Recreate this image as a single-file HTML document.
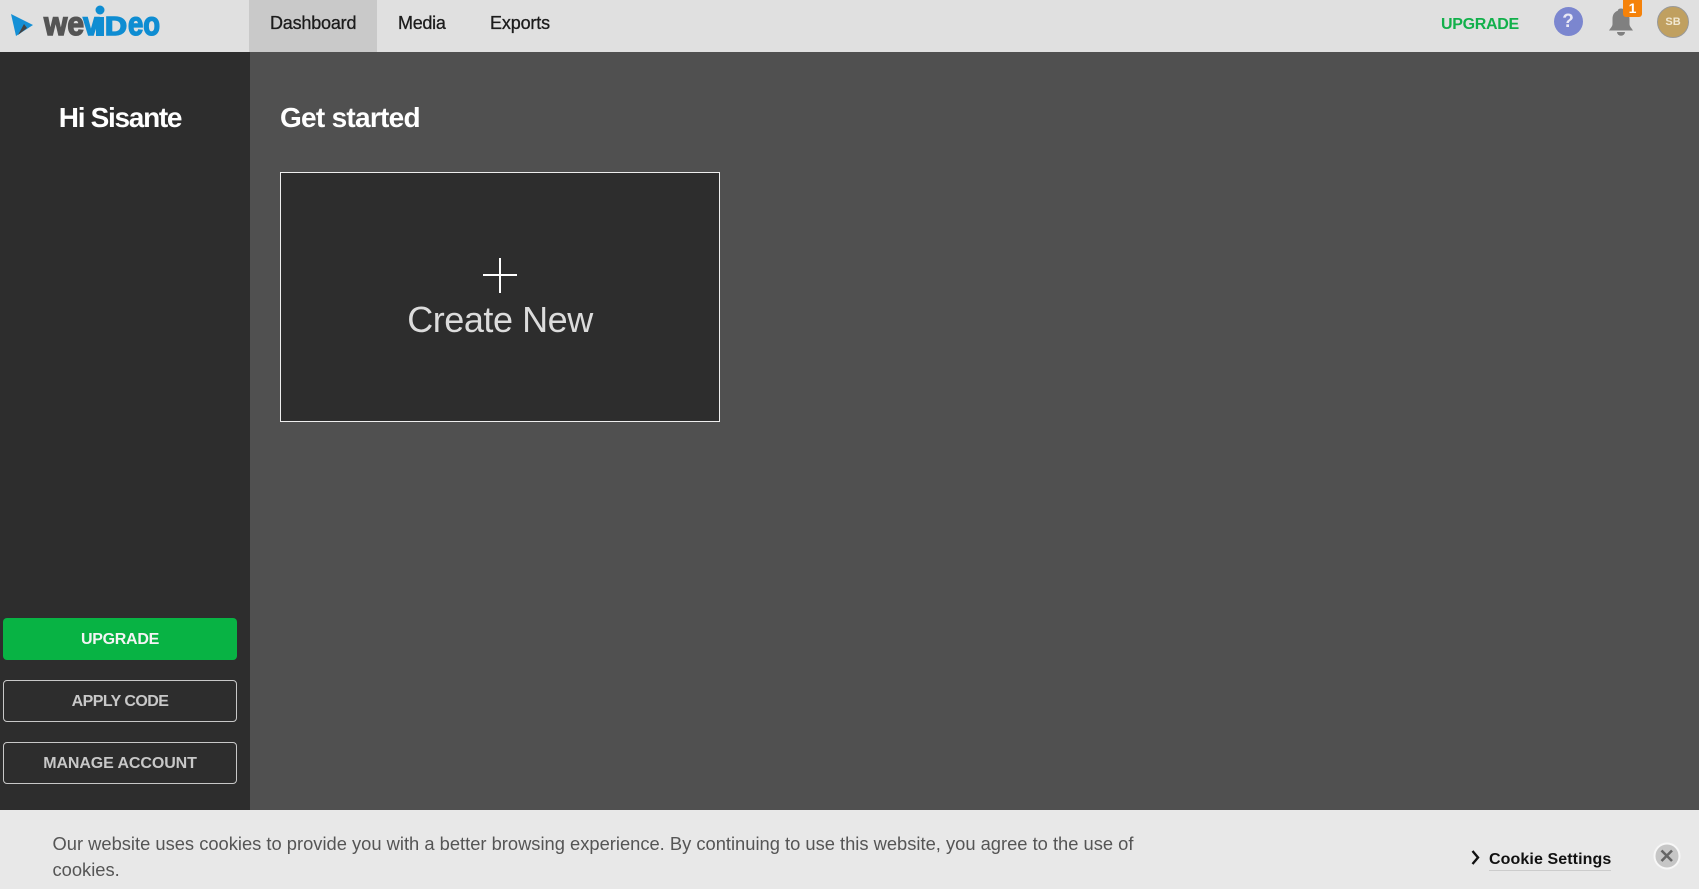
<!DOCTYPE html>
<html lang="en"><head><meta charset="utf-8"><title>WeVideo Dashboard</title>
<style>
*{box-sizing:border-box;margin:0;padding:0}
html,body{width:1699px;height:889px;overflow:hidden;background:#505050;font-family:"Liberation Sans",sans-serif}
.a{position:absolute;white-space:nowrap}
.btn{position:absolute;left:3px;width:234px;height:42px;border-radius:4px;text-align:center;font-weight:bold;font-size:16px;line-height:44px;letter-spacing:-.3px}
.nav{top:0;font-size:18px;line-height:46px;color:#1c1c1c;letter-spacing:-.2px;-webkit-text-stroke:.3px #1c1c1c}
svg text{font-family:"Liberation Sans",sans-serif;font-weight:bold}
</style></head><body>
<div class="a" style="left:0;top:0;width:1699px;height:52px;background:#e0e0e0"></div>
<div class="a" style="left:249px;top:0;width:128px;height:52px;background:#c9c9c9"></div>
<div class="a" style="left:0;top:52px;width:250px;height:758px;background:#2d2d2d"></div>

<svg class="a" style="left:0;top:0" width="180" height="52" viewBox="0 0 180 52">
<path d="M11 14 L33 25 L16 36 Z" fill="#1590d6"/>
<path d="M18 35 L24 24 L27 28 Z" fill="#444"/>
<text x="44" y="35" font-size="33" fill="#555" stroke="#555" stroke-width="1.500" textLength="40" lengthAdjust="spacingAndGlyphs">we</text>
<text x="83" y="35" font-size="33" fill="#0f8dd2" stroke="#0f8dd2" stroke-width="1.500" textLength="16" lengthAdjust="spacingAndGlyphs">v</text>
<rect x="96" y="17" width="8" height="19" fill="#0f8dd2"/>
<text x="105" y="35" font-size="26" fill="#0f8dd2" stroke="#0f8dd2" stroke-width="1.500" textLength="22" lengthAdjust="spacingAndGlyphs">D</text>
<text x="128" y="35" font-size="33" fill="#0f8dd2" stroke="#0f8dd2" stroke-width="1.500" textLength="32" lengthAdjust="spacingAndGlyphs">eo</text>
<circle cx="100" cy="10" r="4.500" fill="#0f8dd2"/>
</svg>

<div class="a nav" style="left:270px">Dashboard</div>
<div class="a nav" style="left:398px;letter-spacing:-.3px">Media</div>
<div class="a nav" style="left:490px;letter-spacing:-.15px">Exports</div>

<div class="a" style="left:1441px;top:12.500px;font-size:16px;line-height:24px;font-weight:bold;color:#12b04b;letter-spacing:-.3px">UPGRADE</div>
<div class="a" style="left:1553.500px;top:7px;width:29px;height:29px;border-radius:50%;background:#7b86cf;color:#e8e8f4;font-weight:bold;font-size:19px;line-height:30px;text-align:center">?</div>
<svg class="a" style="left:1606px;top:6px" width="30" height="32" viewBox="0 0 30 32">
<path d="M15 2.500c2 0 3 .8 3.300 2.300C21.800 6 23.500 9 23.500 13v5c0 2.500 2 4 3.500 6.500H3C4.500 22 6.500 20.500 6.500 18v-5c0-4 1.700-7 5.200-8.200C12 3.300 13 2.500 15 2.500z" fill="#808080"/>
<path d="M11 26h8a4 3.800 0 0 1-8 0z" fill="#808080"/>
</svg>
<div class="a" style="left:1623px;top:0;width:19px;height:17px;background:#f5820a;border-radius:0 0 3px 3px;color:#fff;font-weight:bold;font-size:14px;line-height:16px;text-align:center">1</div>
<div class="a" style="left:1657px;top:6px;width:32px;height:32px;border-radius:50%;background:#c0a060;border:1px solid #999;color:#f1e8d2;font-size:11px;font-weight:bold;line-height:30px;text-align:center">SB</div>

<div class="a" style="left:0;top:100px;width:240px;text-align:center;font-size:28px;line-height:36px;font-weight:bold;color:#fff;letter-spacing:-1.300px">Hi Sisante</div>
<div class="a" style="left:280px;top:100px;font-size:28px;line-height:36px;font-weight:bold;color:#fff;letter-spacing:-.72px">Get started</div>

<div class="a" style="left:280px;top:172px;width:440px;height:250px;background:#2d2d2d;border:1px solid #eee"></div>
<div class="a" style="left:483px;top:274px;width:34px;height:2px;background:#fff"></div>
<div class="a" style="left:499px;top:258px;width:2px;height:35px;background:#fff"></div>
<div class="a" style="left:280px;top:296px;width:440px;text-align:center;font-size:36px;line-height:48px;color:#dcdcdc;letter-spacing:-.45px">Create New</div>

<div class="btn" style="top:618px;background:#08b344;color:#f4f4f4">UPGRADE</div>
<div class="btn" style="top:680px;border:1px solid #c8c8c8;color:#c8c8c8;line-height:41px;letter-spacing:-.55px">APPLY CODE</div>
<div class="btn" style="top:742px;border:1px solid #c8c8c8;color:#c8c8c8;line-height:41px;letter-spacing:-.1px">MANAGE ACCOUNT</div>

<div class="a" style="left:0;top:810px;width:1699px;height:79px;background:#e8e8e8"></div>
<div class="a" style="left:52.500px;top:831px;width:1100px;white-space:normal;font-size:18.330px;line-height:26px;color:#555">Our website uses cookies to provide you with a better browsing experience. By continuing to use this website, you agree to the use of<br>cookies.</div>
<svg class="a" style="left:1470px;top:849px" width="12" height="17" viewBox="0 0 12 17"><path d="M2.500 2 L8 8.500 L2.500 15" fill="none" stroke="#111" stroke-width="2.400"/></svg>
<div class="a" style="left:1489px;top:849.500px;height:21px;font-size:16px;line-height:20px;font-weight:bold;color:#111;letter-spacing:.1px;border-bottom:1px solid #ccc">Cookie Settings</div>
<svg class="a" style="left:1653px;top:842px" width="28" height="28" viewBox="0 0 28 28"><circle cx="14" cy="14" r="12.500" fill="#c6c6c6" stroke="#f7f7f7" stroke-width="2"/><path d="M8.500 8.500 L19 19 M19 8.500 L8.500 19" stroke="#666" stroke-width="2.600"/></svg>
</body></html>
